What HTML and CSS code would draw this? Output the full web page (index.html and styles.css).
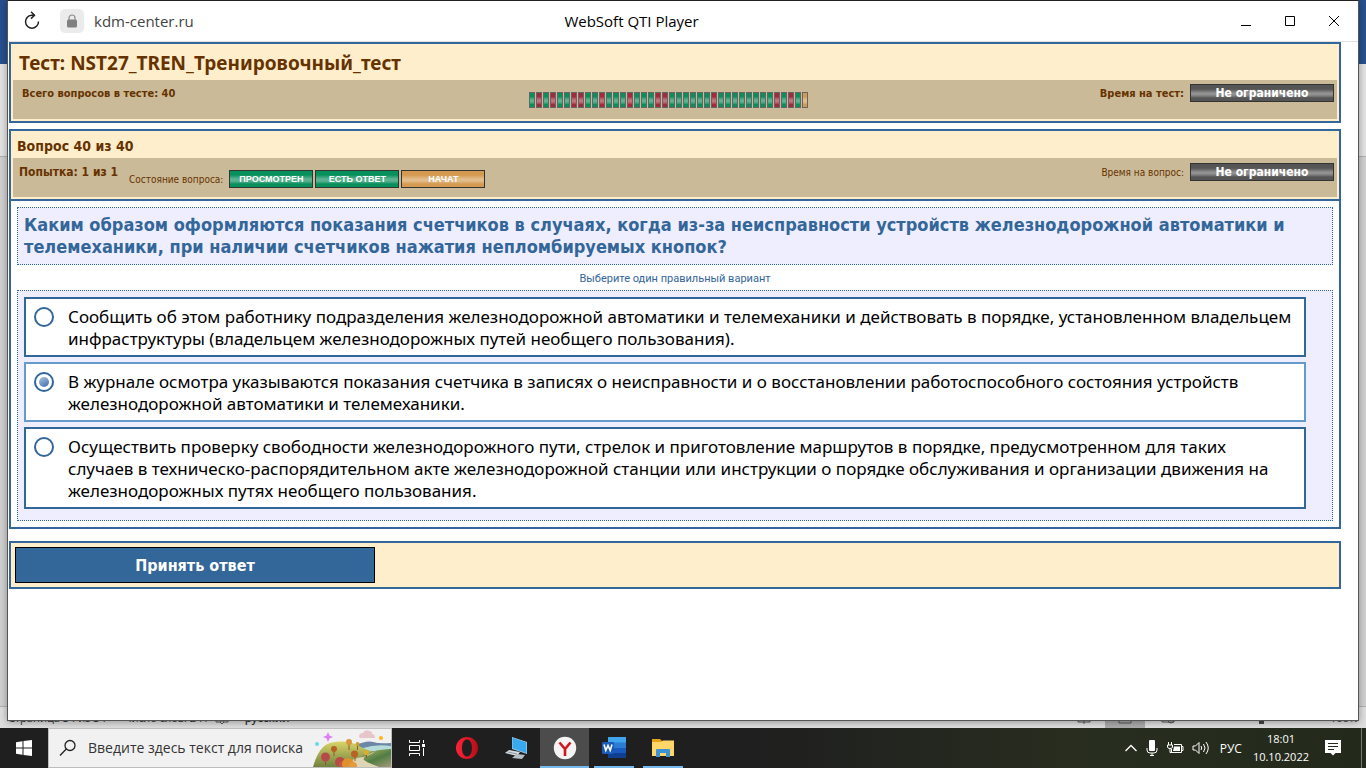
FILE: index.html
```html
<!DOCTYPE html>
<html lang="ru">
<head>
<meta charset="utf-8">
<title>WebSoft QTI Player</title>
<link rel="stylesheet" href="styles.css">
</head>
<body>
<div class="desktop">
  <div class="backdrop" aria-hidden="true">
    <div class="backdrop-ribbon"></div>
    <div class="backdrop-tools"></div>
    <div class="backdrop-page"></div>
    <div class="backdrop-status">
      <span class="st-page">Страница 34 из 34</span>
      <span class="st-words">Число слов: 241</span>
      <svg class="st-book" width="14" height="12" viewBox="0 0 14 12"><path d="M1 1h5v9H1zM8 1h5v9H8zM5 10l2 2 2-2" fill="none" stroke="#555"/></svg>
      <span class="st-lang">русский</span>
      <span class="st-space"></span>
      <svg class="st-focus" width="14" height="12" viewBox="0 0 14 12"><path d="M1 1h12v9H1zM7 8v4" fill="none" stroke="#555"/></svg>
      <span class="st-view"><svg width="14" height="12" viewBox="0 0 14 12"><path d="M1 1h12v10H1z" fill="none" stroke="#555"/></svg></span>
      <svg class="st-web" width="14" height="12" viewBox="0 0 14 12"><path d="M1 1h12v9H1z" fill="none" stroke="#555"/><circle cx="10" cy="8" r="3" fill="none" stroke="#555"/></svg>
      <span class="st-knob"></span>
      <span class="st-zoom">100%</span>
    </div>
  </div>

  <div class="window">
    <header class="titlebar">
      <div class="address">
        <button class="icon-btn" type="button" aria-label="Обновить">
          <svg width="18" height="20" viewBox="0 0 18 20"><path d="M11 4.200H8.500A6.500 6.500 0 1 0 15.500 10.500M8 .8 11.500 4.200 8 7.600" fill="none" stroke="#222" stroke-width="1.500"/></svg>
        </button>
        <span class="lock">
          <svg width="12" height="14" viewBox="0 0 12 14"><path d="M3 7V4a3 3 0 0 1 6 0v3" fill="none" stroke="#8a8a8a" stroke-width="1.200"/><rect x="1" y="5.500" width="10" height="8" rx="1.500" fill="#808080"/></svg>
        </span>
        <span class="host">kdm-center.ru</span>
      </div>
      <div class="caption">WebSoft QTI Player</div>
      <div class="controls">
        <button class="icon-btn" type="button" aria-label="Свернуть"><svg width="12" height="12" viewBox="0 0 12 12"><path d="M1 10.500h10" stroke="#000"/></svg></button>
        <button class="icon-btn" type="button" aria-label="Развернуть"><svg width="12" height="12" viewBox="0 0 12 12"><path d="M1.500 1.500h9v9h-9z" fill="none" stroke="#000"/></svg></button>
        <button class="icon-btn" type="button" aria-label="Закрыть"><svg width="12" height="12" viewBox="0 0 12 12"><path d="M1 1l10 10M11 1 1 11" stroke="#000"/></svg></button>
      </div>
    </header>

    <main class="player">
      <section class="panel panel-test">
        <h1 class="test-title">Тест: NST27_TREN_Тренировочный_тест</h1>
        <div class="band band-test">
          <div class="total">Всего вопросов в тесте: 40</div>
          <div class="progress" id="progress"></div>
          <div class="timer"><span class="timer-label strong">Время на тест:</span><span class="timer-value">Не ограничено</span></div>
        </div>
      </section>

      <section class="panel panel-question">
        <h2 class="question-no">Вопрос 40 из 40</h2>
        <div class="band band-question">
          <div class="state">
            <span class="attempt">Попытка: 1 из 1</span>
            <span class="state-label">Состояние вопроса:</span>
            <span class="pills">
              <span class="pill green">ПРОСМОТРЕН</span>
              <span class="pill green">ЕСТЬ ОТВЕТ</span>
              <span class="pill orange">НАЧАТ</span>
            </span>
          </div>
          <div class="timer"><span class="timer-label">Время на вопрос:</span><span class="timer-value">Не ограничено</span></div>
        </div>
      </section>

      <form class="panel panel-body" id="quiz">
        <div class="question" id="question">Каким образом оформляются показания счетчиков в случаях, когда из-за неисправности устройств железнодорожной автоматики и телемеханики, при наличии счетчиков нажатия непломбируемых кнопок?</div>
        <p class="hint">Выберите один правильный вариант</p>
        <div class="answers" role="radiogroup" aria-labelledby="question">
          <label class="answer"><input class="radio" type="radio" name="answer"><span>Сообщить об этом работнику подразделения железнодорожной автоматики и телемеханики и действовать в порядке, установленном владельцем инфраструктуры (владельцем железнодорожных путей необщего пользования).</span></label>
          <label class="answer selected"><input class="radio" type="radio" name="answer" checked><span>В журнале осмотра указываются показания счетчика в записях о неисправности и о восстановлении работоспособного состояния устройств железнодорожной автоматики и телемеханики.</span></label>
          <label class="answer"><input class="radio" type="radio" name="answer"><span>Осуществить проверку свободности железнодорожного пути, стрелок и приготовление маршрутов в порядке, предусмотренном для таких случаев в техническо-распорядительном акте железнодорожной станции или инструкции о порядке обслуживания и организации движения на железнодорожных путях необщего пользования.</span></label>
        </div>
      </form>

      <div class="panel panel-actions">
        <button class="submit" type="submit" form="quiz">Принять ответ</button>
      </div>
    </main>
  </div>
</div>

<footer class="taskbar">
  <button class="task start" type="button" aria-label="Пуск">
    <svg width="16" height="16" viewBox="0 0 16 16" fill="#fff"><path d="M0 2.200 6.500 1.300v6.200H0zM7.500 1.100 16 0v7.500H7.500zM0 8.500h6.500v6.200L0 13.800zM7.500 8.500H16V16l-8.500-1.100z"/></svg>
  </button>
  <label class="search">
    <svg class="search-icon" width="18" height="18" viewBox="0 0 18 18"><circle cx="11" cy="6.500" r="5" fill="none" stroke="#222" stroke-width="1.300"/><path d="M7.300 10 1 16.500" stroke="#222" stroke-width="1.300"/></svg>
    <input class="search-input" type="text" placeholder="Введите здесь текст для поиска" aria-label="Введите здесь текст для поиска">
    <svg class="search-art" width="80" height="38" viewBox="0 0 80 38">
      <defs>
        <linearGradient id="hill" x1="0" y1="0" x2="0" y2="1"><stop offset="0" stop-color="#d8d468"/><stop offset="1" stop-color="#71813f"/></linearGradient>
        <linearGradient id="hill2" x1="0" y1="0" x2="1" y2="1"><stop offset="0" stop-color="#d5ca72"/><stop offset=".6" stop-color="#4f7d43"/><stop offset="1" stop-color="#a69a78"/></linearGradient>
      </defs>
      <path d="M42 17Q56 11 62 13T80 14V26H42z" fill="#6b86a6"/>
      <path d="M52 19Q65 15 80 17V22H52z" fill="#b5dcdb"/>
      <path d="M2 38Q8 17 19 14Q36 10 48 17T80 26V38z" fill="url(#hill)"/>
      <path d="M38 38Q49 21 80 20V38z" fill="url(#hill2)"/>
      <path d="M34 38Q39 29 52 28Q58 27 65 22Q50 28 53 31Q57 34 68 38z" fill="#ded5b5"/>
      <path d="M17 3l1.500 3.500L22 8l-3.500 1.500L17 13l-1.500-3.500L12 8l3.500-1.500z" fill="#df7ff5"/>
      <circle cx="6" cy="15" r="2" fill="#68d8ed"/><circle cx="70" cy="9" r="2" fill="#ffb515"/>
      <path d="M48 8q0-4 4-4 2-4 6-2 3 0 3 3 3 0 3 4H49z" fill="#e8c5cb"/>
      <path d="M38 14v7M46.500 15v6M23 20v7M44 26v6M55.500 23v6M14.500 29v7" stroke="#8a5b2d"/>
      <circle cx="38" cy="13" r="3" fill="#db953f"/><circle cx="46.500" cy="15" r="2" fill="#cf9e2b"/>
      <circle cx="23" cy="20" r="3" fill="#b56028"/><circle cx="14.500" cy="28" r="4.500" fill="#b64a49"/>
      <circle cx="43.500" cy="25" r="3.500" fill="#b76325"/><circle cx="55.500" cy="23.500" r="2.500" fill="#daae30"/>
      <circle cx="29" cy="33" r="5" fill="#b84b43"/><circle cx="32" cy="36" r="4" fill="#c65646"/>
      <circle cx="37" cy="35" r="6" fill="#df902f"/><circle cx="42" cy="37" r="4" fill="#e59b3a"/>
    </svg>
  </label>
  <nav class="apps">
    <button class="task view" type="button" aria-label="Представление задач"><svg width="18" height="16" viewBox="0 0 18 16"><path d="M1.500 5.500h10v5h-10zM1.500 0v2.500h10V0M1.500 16v-2.500h10V16M15.500 0v3M15.500 8v8" fill="none" stroke="#fff"/><path d="M14 4h3v3h-3z" fill="#fff"/></svg></button>
    <button class="task" type="button" aria-label="Opera"><svg width="24" height="24" viewBox="0 0 24 24"><defs><linearGradient id="op" x1="0" x2="1"><stop offset="0" stop-color="#ff2438"/><stop offset="1" stop-color="#b40d18"/></linearGradient></defs><path fill-rule="evenodd" fill="url(#op)" d="M12 1a11 11 0 0 1 0 22A11 11 0 0 1 12 1zm0 2.500C8.500 3.500 7 8 7 12s1.500 8.500 5 8.500S17 16 17 12 15.500 3.500 12 3.500z"/></svg></button>
    <button class="task" type="button" aria-label="Компьютер"><svg width="24" height="24" viewBox="0 0 24 24"><path d="M8 1l15 5v12L8 13z" fill="#a7cde5"/><path d="M8.500 1.800 22.300 6.500V17L8.500 12.300z" fill="#38a8ef"/><path d="M5 14l11 2-3 4-12-3z" fill="#d3dce1"/><path d="M13 18l8 1-3 4-10-1z" fill="#b7c0c7"/><path d="M4 16l9 2" stroke="#8b969d"/></svg></button>
    <button class="task active" type="button" aria-label="Яндекс Браузер"><svg width="24" height="24" viewBox="0 0 24 24"><circle cx="12" cy="12" r="11.200" fill="#f4f4f4"/><path d="M6.500 6.500 12 13l5.500-6.500M12 12.500V20" fill="none" stroke="#d3161c" stroke-width="2.600"/></svg></button>
    <button class="task running" type="button" aria-label="Word"><svg width="26" height="24" viewBox="0 0 26 24"><path d="M7 1h18v6H7z" fill="#41a5ee"/><path d="M7 6.500h18V12H7z" fill="#2b7cd3"/><path d="M7 12h18v5.500H7z" fill="#185abd"/><path d="M7 17h18v5H7z" fill="#103f91"/><rect x="1" y="6" width="12" height="12" rx="1" fill="#1959bb"/><path d="M3 8.500l1.800 6L7 9.500l2.200 5L11 8.500" fill="none" stroke="#fff" stroke-width="1.600"/></svg></button>
    <button class="task running" type="button" aria-label="Проводник"><svg width="24" height="24" viewBox="0 0 24 24"><path d="M1 3h8l2 2h11v15H1z" fill="#e8a317"/><path d="M1 6h9l2-1.500h11V20H1z" fill="#ffd768"/><path d="M5 21v-7q0-1 1-1h12q1 0 1 1v7h-4v-4H9v4z" fill="#3c92d5"/></svg></button>
  </nav>
  <div class="tray">
    <svg width="14" height="10" viewBox="0 0 14 10"><path d="M1.500 8 7 2.500 12.500 8" fill="none" stroke="#fff" stroke-width="1.300"/></svg>
    <svg width="12" height="16" viewBox="0 0 12 16"><rect x="3" y="0" width="6" height="11" rx="1" fill="#fff"/><path d="M1 8v2q0 3 3 3h4q3 0 3-3V8M6 13v3M4 15.500h4" fill="none" stroke="#fff"/></svg>
    <svg width="18" height="14" viewBox="0 0 18 14"><path d="M2.500 1v3M5.500 1v3M1.500 4h5v2q0 1.500-2.500 1.500T1.500 6zM4 8v3.500h2M8 3.500h7.500v8h-10V8M15.500 5.500h1.500v4h-1.500" fill="none" stroke="#fff"/><path d="M8 5.500h6v4.500H7z" fill="#fff"/></svg>
    <svg width="18" height="14" viewBox="0 0 18 14"><path d="M1 5h2.500L7 1.500v11L3.500 9H1zM9 5q1.500 2 0 4M11.500 3q3 4 0 8M14 1q4.500 6 0 12" fill="none" stroke="#fff"/></svg>
    <span class="lang">РУС</span>
    <div class="clock"><time>18:01</time><time>10.10.2022</time></div>
    <svg class="note" width="16" height="16" viewBox="0 0 16 16"><path d="M0 0h16v13h-5.500L8 15.500 5.500 13H0z" fill="#fff"/><path d="M3 3.500h10M3 6.500h10M3 9.500h6" stroke="#252b1d"/></svg>
    <span class="peek"></span>
  </div>
</footer>
<script src="progress.js"></script>
</body>
</html>
```

FILE: progress.js
```js
// One cell per question: g = correct, r = wrong, o = current.
const results = 'grgrggrrggrgggrgggrrggggggrggggggggrgrgo';
const names = { g: 'green', r: 'red', o: 'orange' };
const bar = document.getElementById('progress');
for (const r of results) {
  const cell = document.createElement('span');
  cell.className = 'cell ' + names[r];
  bar.append(cell);
}
```

FILE: styles.css
```css
* { box-sizing: border-box; }
:root {
  --blue: #336699;
  --cream: #ffeecc;
  --tan: #cbba98;
  --brown: #663300;
  --lilac: #eeeeff;
  --bold-face: "DejaVu Sans Condensed", "DejaVu Sans", sans-serif;
  --text-face: "Noto Sans", sans-serif;
  --shell-face: "Open Sans", sans-serif;
}
body {
  margin: 0;
  min-height: 100vh;
  display: flex;
  flex-direction: column;
  font-family: var(--text-face);
  color: #000;
}
button { font: inherit; border: 0; padding: 0; background: none; }
svg { display: block; flex: none; }

.desktop { position: relative; flex: 1; display: flex; padding: 0 7px 7px; background: #c9c9c9; }
.backdrop { position: absolute; inset: 0; display: flex; flex-direction: column; overflow: hidden; }
.backdrop-ribbon { height: 64px; background: #28508f; }
.backdrop-tools { height: 93px; background: #e2e2e2; border-bottom: 1px solid #b0b0b0; }
.backdrop-page { flex: 1; background: #d0d0d0; }
.backdrop-status {
  height: 22px;
  display: flex;
  align-items: center;
  padding: 0 8px;
  background: #dedede;
  border-top: 1px solid #b0b0b0;
  font: 11px/20px var(--shell-face);
  color: #333;
  white-space: nowrap;
}
.st-words { margin-left: 18px; }
.st-book { margin-left: 6px; }
.st-lang { margin-left: 16px; font-weight: 600; }
.st-space { flex: 1; }
.st-view { width: 40px; height: 100%; margin: 0 16px 0 14px; display: flex; align-items: center; justify-content: center; background: #aaa; }
.st-knob { width: 5px; height: 12px; margin: 0 66px 0 84px; background: #444; }

.window {
  position: relative;
  flex: 1;
  background: #fff;
  border: 1px solid #555;
  border-top-color: #222;
  box-shadow: 0 1px 7px rgba(0, 0, 0, .35);
}
.titlebar {
  display: grid;
  grid-template-columns: 1fr auto 1fr;
  align-items: center;
  height: 41px;
  padding: 0 14px 0 13px;
  border-bottom: 1px solid #e2e2e2;
  font: 15px/20px var(--shell-face);
}
.address { display: flex; align-items: center; }
.icon-btn { display: flex; padding: 2px; }
.lock { display: flex; align-items: center; justify-content: center; width: 24px; height: 24px; margin: 0 10px 0 17px; border-radius: 5px; background: #ebebeb; }
.host { color: #444; }
.caption { padding-right: 102px; }
.controls { display: flex; justify-content: flex-end; gap: 28px; padding: 0 2px; }

.player { padding: 0 17px 0 1px; }
.panel { border: 2px solid var(--blue); }
.panel-test, .panel-question { background: var(--cream); padding: 0 2px 2px; }
.panel-test { margin-bottom: 6px; }
.test-title { margin: 0; padding: 8px 6px 6px; font: bold 19px/22px var(--text-face); color: var(--brown); }
.question-no { margin: 0; padding: 6px 4px 3px; font: bold 14px/18px var(--bold-face); color: var(--brown); }
.band { min-height: 39px; background: var(--tan); color: var(--brown); }
.band-test { display: grid; grid-template-columns: 1fr auto 1fr; padding: 4px 3px 0 9px; }
.total { font: bold 11px/20px var(--bold-face); }
.progress { display: flex; gap: 1px; padding: 8px 20px 0 0; }
.cell { width: 6px; height: 16px; border: 1px solid #666; }
.green { background: linear-gradient(#07905c 25%, #2f9e75 35%, #5cb492 50%, #5cb492 60%, #2f9e75 75%, #07905c 80%); }
.red { background: linear-gradient(#a32a3c 25%, #b24a5a 35%, #c47480 50%, #c47480 60%, #b24a5a 75%, #a32a3c 80%); }
.orange { background: linear-gradient(#d49a52 25%, #daa869 35%, #e3bd8c 50%, #e3bd8c 60%, #daa869 75%, #d49a52 80%); }
.timer { display: flex; align-items: flex-start; justify-content: flex-end; gap: 6px; }
.timer-label { font: 10px/20px "DejaVu Sans Condensed", sans-serif; }
.timer-label.strong { font: bold 11px/20px var(--bold-face); }
.timer-value {
  width: 144px;
  border: 1px solid #333;
  background: linear-gradient(#555 25%, #6b6b6b 35%, #919191 50%, #919191 60%, #6b6b6b 75%, #555 80%);
  color: #fff;
  font: bold 12px/16px var(--bold-face);
  text-align: center;
}
.band-question { display: flex; justify-content: space-between; padding: 5px 3px 0 6px; }
.state { display: flex; align-items: flex-start; }
.attempt { font: bold 12px/18px var(--bold-face); }
.state-label { margin: 8px 6px 0 11px; font: 10px/18px "DejaVu Sans Condensed", sans-serif; }
.pills { display: flex; gap: 2px; margin-top: 7px; }
.pill { width: 84px; border: 1px solid #333; color: #fff; text-align: center; font: bold 9px/16px "Liberation Sans", sans-serif; }

.panel-body { margin-top: -2px; padding: 6px; }
.question { border: 1px dotted var(--blue); background: var(--lilac); padding: 6px; color: var(--blue); font: bold 18px/22px var(--bold-face); }
.hint { margin: 0; padding: 5px 0 2px; text-align: center; color: var(--blue); font: 11px/18px Roboto, sans-serif; }
.answers { display: flex; flex-direction: column; gap: 5px; padding: 6px 26px 11px 6px; border: 1px dotted var(--blue); background: var(--lilac); }
.answer {
  display: flex;
  align-items: flex-start;
  gap: 14px;
  padding: 7px 10px 5px 8px;
  border: 2px solid var(--blue);
  background: #fff;
  font-size: 17px;
  line-height: 22px;
}
.answer.selected { border-color: #6699cc; }
.radio { appearance: none; display: grid; place-items: center; flex: none; width: 20px; height: 20px; margin: 1px 0 0; border: 2px solid var(--blue); border-radius: 50%; background: #fff; }
.radio:checked::before { content: ""; width: 10px; height: 10px; border-radius: 50%; background: linear-gradient(150deg, #a9c8df, #4169ab); }

.panel-actions { margin-top: 12px; padding: 4px; background: var(--cream); }
.submit { display: block; width: 360px; max-width: 100%; padding: 8px 0 6px; border: 1px solid #000; background: var(--blue); color: #fff; font: bold 16px/20px var(--bold-face); }

.taskbar { position: relative; display: flex; height: 40px; background: linear-gradient(90deg, #1f1f1f 55%, #282e1f 80%, #23291b); color: #fff; font-family: var(--shell-face); }
.task { display: flex; align-items: center; justify-content: center; width: 49px; height: 40px; }
.start { width: 48px; }
.view { width: 50px; }
.active { background: #4c4c4c; border-bottom: 2px solid #76b9ed; border-top: 2px solid #4c4c4c; }
.running { background: linear-gradient(#76b9ed, #76b9ed) center bottom / 40px 2px no-repeat; }
.search { display: flex; align-items: center; width: 344px; padding-left: 10px; background: #f1f1f1; border: 1px solid #bdbdbd; }
.search-input { flex: 1; min-width: 0; margin-left: 11px; padding: 0; border: 0; outline: 0; background: none; font: 14px/20px var(--shell-face); color: #333; }
.search-input::placeholder { color: #333; opacity: 1; }
.search-art { margin-left: -4px; }
.apps { display: flex; flex: 1; }
.tray { display: flex; align-items: center; gap: 8px; padding-right: 4px; }
.lang { margin: 0 -2px 0 2px; font-size: 12px; }
.clock { display: flex; flex-direction: column; align-items: center; margin: 0 8px 0 5px; font-size: 11px; line-height: 18px; }
.peek { width: 1px; height: 40px; margin-left: 12px; background: #777; }
```
